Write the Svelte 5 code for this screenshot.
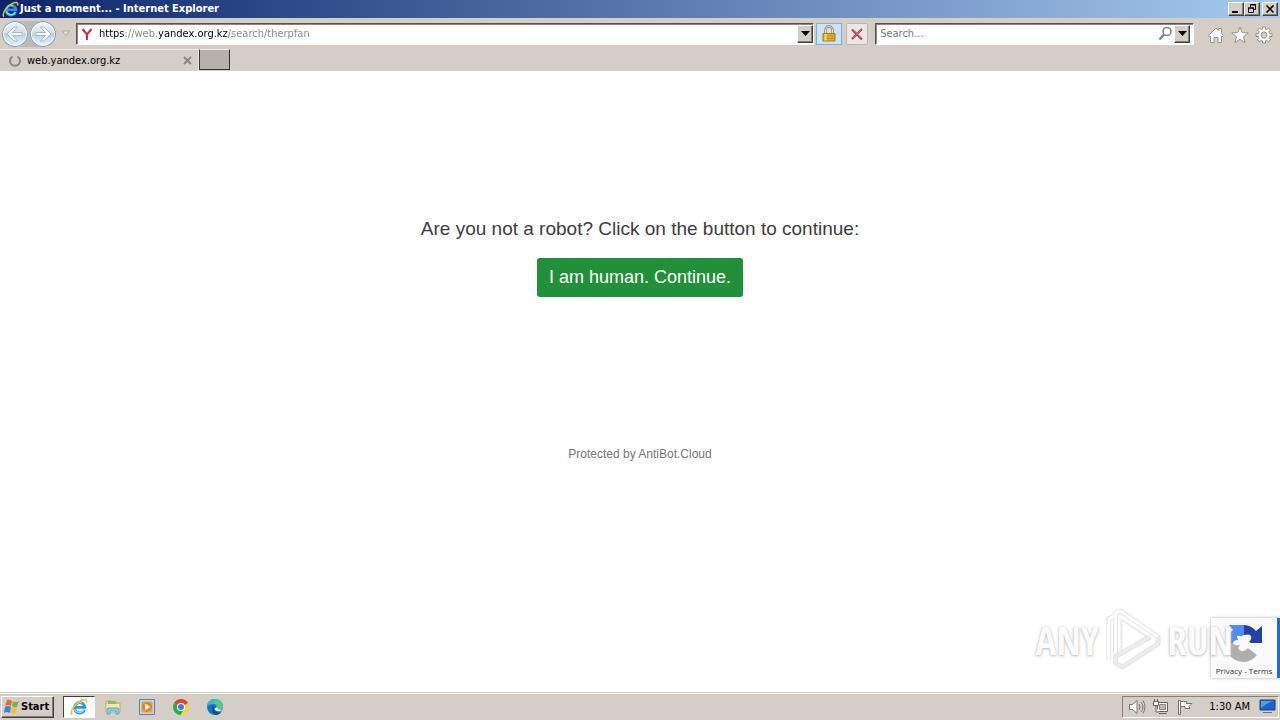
<script>
  let address = $state('https://web.yandex.org.kz/search/therpfan');
  let query = $state('');
</script>

{#snippet ieLogo(size)}
  <svg width={size} height={size} viewBox="0 0 16 16" aria-hidden="true">
    <path d="M12.9 10.4A4.600 4.600 0 1 1 13.2 8.3H5.2" fill="none" stroke="#2d91db" stroke-width="2.600" />
    <path d="M12.5 10.3A4.6 4.6 0 0 1 4 9.9M4.500 6.500a4.500 4.500 0 0 1 6-2" fill="none" stroke="#8bdcf8" stroke-width="1.2" />
    <path d="M1.8 14.8C-.6 12 4.400 5 9.500 2.500C12.800.800 15.500.800 14.600 4.200" fill="none" stroke="#e9c23d" stroke-width="1.4" />
  </svg>
{/snippet}

<div class="screen">
  <header class="title-bar">
    {@render ieLogo(17)}
    <span class="title">Just a moment... - Internet Explorer</span>
    <div class="window-buttons">
      <button aria-label="Minimize"><svg width="12" height="10" viewBox="0 0 12 10"><path d="M2 8h6" stroke="#000" stroke-width="2" /></svg></button>
      <button aria-label="Restore"><svg width="12" height="10" viewBox="0 0 12 10" fill="none" stroke="#000"><path d="M4.500 3V.500h5v5H8M4 1h6M2.500 4v4.500h5V4zM2 4h6" /></svg></button>
      <button class="close" aria-label="Close"><svg width="12" height="10" viewBox="0 0 12 10"><path d="M2.500 1.500l7 7m0-7l-7 7" stroke="#000" stroke-width="1.700" /></svg></button>
    </div>
  </header>

  <nav class="nav-bar" aria-label="Browser">
    <div class="history">
      <button class="round" aria-label="Back"><svg width="26" height="26" viewBox="0 0 26 26">
        <path d="M12 6L5 13L12 20h3.500l-5-5.500H20v-3h-9.500l5-5.500z" fill="#fff" stroke="#9bb9d3" /></svg></button>
      <button class="round" aria-label="Forward"><svg width="26" height="26" viewBox="0 0 26 26">
        <path d="M14 6l7 7l-7 7h-3.500l5-5.500H6v-3h9.500l-5-5.500z" fill="#fff" stroke="#9bb9d3" /></svg></button>
    </div>
    <button class="recent" aria-label="Recent pages"><svg width="10" height="7" viewBox="0 0 10 7"><path d="M1 1h8L5 5.500z" fill="#e5e1da" stroke="#aaa69f" /></svg></button>
    <div class="field address">
      <svg width="16" height="16" viewBox="0 0 16 16" aria-hidden="true"><path d="M2.500 3L7 8.500L11.500 3M7 8v6" fill="none" stroke="#d8293f" stroke-width="2" /></svg>
      <input class="url" aria-label="Address" bind:value={address} spellcheck="false" />
      <button class="drop" aria-label="Show address history"><svg width="9" height="5" viewBox="0 0 9 5"><path d="M0 0h9L4.500 5z" /></svg></button>
    </div>
    <button class="tool lock" aria-label="Security report"><svg width="16" height="18" viewBox="0 0 16 18">
      <path d="M4.500 9V5a3.500 3.500 0 0 1 7 0v4" fill="none" stroke="#8c8159" stroke-width="2.400" />
      <path d="M4.500 9V5a3.500 3.500 0 0 1 7 0v4" fill="none" stroke="#e9dfb8" />
      <path d="M2 8.500h12v7.500H2z" fill="#e3b52c" stroke="#a77a0d" /><path d="M2.500 11h11M2.500 13.500h11" stroke="#b98a14" /><path d="M4.500 9v6.500" stroke="#f9df7b" stroke-width="2" /></svg></button>
    <button class="tool stop" aria-label="Stop"><svg width="14" height="14" viewBox="0 0 14 14">
      <path d="M2 2.500l10 10M12 2L2 12" fill="none" stroke="#9c4850" stroke-width="2.200" /><path d="M3 3l8 8m0-8l-8 8" stroke="#d85b5b" /></svg></button>
    <div class="field search">
      <input aria-label="Search" placeholder="Search..." bind:value={query} />
      <button class="find" aria-label="Search the web"><svg width="15" height="15" viewBox="0 0 15 15" fill="none" stroke="#858585"><circle cx="9" cy="5.500" r="4" stroke-width="1.600" /><path d="M6 8.500l-4.500 5" stroke-width="2.400" /></svg></button>
      <button class="drop" aria-label="Search options"><svg width="9" height="5" viewBox="0 0 9 5"><path d="M0 0h9L4.500 5z" /></svg></button>
    </div>
    <div class="commands">
      <button aria-label="Home"><svg width="18" height="18" viewBox="0 0 18 18" fill="#fff" stroke="#96918a"><path d="M1.500 9.500L9 2l2.500 2.500V2.500h3v5l2 2-1.500 1.500L14.500 10v6.500H11v-5H7v5H3.500V10L2.500 11z" /></svg></button>
      <button aria-label="Favorites"><svg width="18" height="18" viewBox="0 0 18 18" fill="#fff" stroke="#96918a"><path d="M9 1l2.200 5.600 6 .3-4.700 3.800 1.600 5.900L9 13.300l-5.100 3.300 1.600-5.900L.8 6.900l6-.3z" /></svg></button>
      <button aria-label="Tools"><svg width="18" height="18" viewBox="0 0 18 18" fill="#fff" stroke="#96918a"><path d="M7.500 1h3v2.200l1.300.5 1.600-1.600 2.100 2.100-1.600 1.600.6 1.700H17v3h-2.500l-.6 1.700 1.600 1.600-2.100 2.100-1.600-1.600-1.300.5V17h-3v-2.200l-1.300-.5-1.600 1.600-2.100-2.100 1.600-1.600-.6-1.700H1v-3h2.500l.6-1.700-1.600-1.600 2.100-2.100 1.600 1.600 1.300-.5z" /><circle cx="9" cy="9" r="3" fill="#d5cec6" /></svg></button>
    </div>
  </nav>

  <div class="tab-row">
    <div class="tab">
      <svg width="14" height="14" viewBox="0 0 14 14" aria-hidden="true"><path d="M4.500 2.500a5 5 0 1 0 5 0" fill="none" stroke="#858585" stroke-width="2" /></svg>
      <span>web.yandex.org.kz</span>
      <button aria-label="Close tab"><svg width="9" height="9" viewBox="0 0 9 9"><path d="M1 1l7 7m0-7L1 8" stroke="#89847d" stroke-width="1.800" /></svg></button>
    </div>
    <button class="new-tab" aria-label="New tab"></button>
  </div>

  <main>
    <p class="question">Are you not a robot? Click on the button to continue:</p>
    <button class="human">I am human. Continue.</button>
    <p class="protected">Protected by AntiBot.Cloud</p>

    <aside class="captcha">
      <svg width="38" height="38" viewBox="0 0 38 38" aria-hidden="true">
        <path d="M4 1h15v10q-2 0-3 2l3 6H1Q1 11 8 6z" fill="#4d8df2" />
        <path d="M19 1q7 0 12 6l6-5v17H19l6-6q-2-3-6-2z" fill="#213fae" />
        <path d="M1 19h18l-6 5q5 6 10 0l9 7Q26 38 19 38Q2 37 1 19z" fill="#aeaeae" />
        <path d="M12 12q4-1 6 3 3-6 7-4 3 3-1 7 4 1 3 5-3 3-6 0-1 5-5 4-4-2-1-6-6 1-7-2 0-3 5-3z" fill="#fafafa" />
      </svg>
      <div><a href="#privacy">Privacy</a> - <a href="#terms">Terms</a></div>
    </aside>
    <div class="watermark">
      <span>ANY</span>
      <svg width="58" height="64" viewBox="0 0 60 66" fill="none" aria-hidden="true">
        <g stroke-linejoin="round">
          <path d="M5 54V11L11 8M12 46V5L17 3L56 30V37L19 61L12 57V50L48 30" stroke="#e2e2e2" stroke-width="5" />
          <path d="M18 12L44 29L18 46z" stroke="#e9e9e9" stroke-width="2" />
          <path d="M5 54V11L11 8M12 46V5L17 3L56 30" stroke="#fff" stroke-width="3" />
          <path d="M56 30V37L19 61L12 57V50L48 30" stroke="#ededed" stroke-width="3" />
        </g>
      </svg>
      <span>RUN</span>
    </div>
  </main>

  <footer class="taskbar">
    <button class="start"><svg width="17" height="16" viewBox="0 0 17 16" aria-hidden="true">
      <path d="M4 1q2-1 5 1L8 7Q5 5 2 7z" fill="#e8692c" /><path d="M10 2q3 2 6 0l-2 6q-3 1-5-1z" fill="#73b843" /><path d="M2 8q3-2 6 0l-1 6q-3-2-6 0z" fill="#3d83d5" /><path d="M9 8q3 2 5 1l-1 5q-3 2-5 0z" fill="#f0bf35" /></svg>Start</button>
    <div class="launchers">
      <button class="active" aria-label="Internet Explorer">{@render ieLogo(18)}</button>
      <button aria-label="File Explorer"><svg width="18" height="18" viewBox="0 0 18 18"><path d="M2 3h5l1 2h8v9H2z" fill="#ead075" stroke="#c9a850" /><path d="M4 3h8v3H4z" fill="#83bd75" /><path d="M2.500 6h13v8h-13z" fill="#f6e8a0" /><path d="M3 16v-5q0-1 2-1h8q2 0 2 1v5h-3v-3H6v3z" fill="#8bcbea" stroke="#62a9cc" /></svg></button>
      <button aria-label="Media Player"><svg width="18" height="18" viewBox="0 0 18 18"><path d="M1.500 1.500h15v15h-15z" fill="#b9daf4" stroke="#4d88b9" /><path d="M3.500 3.500h11v11h-11z" fill="#f5a13a" /><circle cx="9" cy="9" r="5" fill="#f27e13" /><path d="M7 5.500L12.500 9L7 12.500z" fill="#fff" /></svg></button>
      <button aria-label="Chrome"><svg width="18" height="18" viewBox="0 0 18 18"><circle cx="9" cy="9" r="8" fill="#ffcd40" /><path d="M9 9L2.100 5A8 8 0 0 1 16 5z" fill="#e34133" /><path d="M9 9L2.100 5A8 8 0 0 0 8.500 17L12 11z" fill="#2da94f" /><circle cx="9" cy="9" r="4" fill="#fff" /><circle cx="9" cy="9" r="3" fill="#3c7de0" /></svg></button>
      <button aria-label="Edge"><svg width="18" height="18" viewBox="0 0 18 18"><circle cx="9" cy="9" r="8" fill="#1474c4" /><path d="M1 9A8 8 0 0 1 17 9q0 3-4 3c-3 0-2-1-2-3q-1-3-4-3Q3 6 1 9z" fill="#35b5d2" /><path d="M10 1.500A8 8 0 0 1 17 9q0 3-4 3c-3 0-2-1-2-3 0-3-2-4-4-4z" fill="#58c98b" /><path d="M11 9q0 3 5 3l-1 1q-5 1-7-2z" fill="#e5edf0" /><path d="M7 7q-3 5 2 10h2q3-1 4-3-6 2-7-4z" fill="#174b92" /></svg></button>
    </div>
    <div class="tray">
      <svg width="18" height="16" viewBox="0 0 18 16" fill="#fff" stroke="#77736c"><path d="M1.500 5.500h3L9 1.500v13L4.500 10.500h-3z" /><path d="M11 5q2 3 0 6M13 3q4 5 0 10M15 1.500q4 6 0 13" fill="none" /></svg>
      <svg width="18" height="16" viewBox="0 0 18 16" fill="#fff" stroke="#66625c"><path d="M5.500 3.500h10v9h-10zM7 14.500h8" /><path d="M7.500 5.500h6v5h-6z" fill="#bdb9b3" stroke="#8d8983" /><path d="M1.500 2.500h5v4h-5zM2.500 0v3m3-3v3M4 7v6h3" /></svg>
      <svg width="18" height="16" viewBox="0 0 18 16" fill="#fff" stroke="#77736c"><path d="M2.500 1.500h2v14h-2z" /><path d="M4.500 2.500h6v2h5.500l-3 3 1 2h-5v-2H4.500z" /></svg>
      <time>1:30 AM</time>
      <svg width="17" height="15" viewBox="0 0 17 15"><path d="M1 1h15v10H1z" fill="#1c62c6" stroke="#174584" /><path d="M2 2h13q-8 2-13 7z" fill="#559de6" /><path d="M4 13.500h9" stroke="#536f96" /></svg>
    </div>
  </footer>
</div>

<style>
  .screen {
    display: flex;
    flex-direction: column;
    min-height: 100vh;
    background: #fff;
    color: #000;
    font: 11px/14px Tahoma, "DejaVu Sans Condensed", "DejaVu Sans", sans-serif;
  }
  .screen * { box-sizing: border-box; }
  svg { display: block; flex: none; }
  button { padding: 0; border: 0; background: none; color: inherit; font: inherit; }
  input { min-width: 0; padding: 0; border: 0; outline: 0; font: inherit; }
  p { margin: 0; }

  .title-bar {
    display: flex;
    align-items: center;
    gap: 1px;
    height: 18px;
    padding: 0 2px;
    background: linear-gradient(90deg, #0b256b, #a6caf0);
    color: #fff;
    font-weight: bold;
  }
  .title { flex: 1; }
  .window-buttons { display: flex; }
  .window-buttons button, .drop {
    display: grid;
    place-items: center;
    border: 1px solid;
    border-color: #fff #404040 #404040 #fff;
    background: #d5cec6;
    box-shadow: inset -1px -1px #858078;
  }
  .window-buttons button { width: 16px; height: 14px; }
  .window-buttons .close { margin-left: 2px; }

  .nav-bar {
    display: flex;
    align-items: center;
    height: 31px;
    padding: 0 7px 0 2px;
    background: #d5cec6;
  }
  .history {
    display: flex;
    gap: 2px;
    border-radius: 13px;
    background: #bdbab6;
  }
  .round {
    width: 26px;
    height: 26px;
    border-radius: 50%;
    background: linear-gradient(#f4f8fb, #d1dfe9 45%, #b8d0e2 50%, #eefaff);
    box-shadow: inset 0 0 0 1px #8299ab, inset 0 0 0 2px #f5f9fc;
  }
  .recent { display: grid; place-items: center; width: 20px; height: 24px; }
  .field {
    display: flex;
    align-items: center;
    height: 22px;
    padding-left: 3px;
    border: 1px solid;
    border-color: #59534c #fff #fff #59534c;
    background: #fff;
    box-shadow: inset 1px 1px #8d877f;
  }
  .address { flex: 743; }
  .url {
    flex: 1;
    margin-left: 3px;
    background: linear-gradient(90deg, #000 26px, #858585 26px 60px, #000 60px 129px, #858585 129px);
    background-clip: text;
    -webkit-background-clip: text;
    color: transparent;
    caret-color: #000;
  }
  .drop { width: 16px; height: 18px; }
  .tool { display: grid; place-items: center; height: 22px; border: 1px solid #aaa7a3; }
  .lock { width: 26px; margin-left: 2px; border-color: #84aee0; background: #cde3fb; }
  .stop { width: 22px; margin: 0 7px 0 4px; border-color: #bbb7b2; border-radius: 2px; background: #ebe7e4; }
  .search { flex: 314; padding: 0 3px 0 4px; }
  .search input { flex: 1; background: transparent; }
  .search input::placeholder { color: #777; opacity: 1; }
  .find { margin-right: 1px; }
  .commands { display: flex; gap: 6px; margin: 3px 0 0 13px; }

  .tab-row { display: flex; height: 22px; background: #d5cec6; }
  .tab {
    display: flex;
    align-items: center;
    gap: 5px;
    width: 199px;
    padding: 0 6px 0 8px;
    border-top: 1px solid #eeeae5;
    border-right: 1px solid #f2eeea;
  }
  .tab span { flex: 1; }
  .new-tab {
    width: 31px;
    height: 21px;
    border: 1px solid #34312e;
    border-top-color: #f1ede9;
    background: #b8b0aa;
  }

  main {
    position: relative;
    display: flex;
    flex: 1;
    flex-direction: column;
    align-items: center;
    padding-top: 145px;
    font-family: Arial, "Liberation Sans", sans-serif;
  }
  .question { color: #3d3d3d; font-size: 19px; line-height: 26px; }
  .human {
    margin-top: 16px;
    padding: 6px 12px;
    border-radius: 3px;
    background: #22903a;
    color: #fff;
    font-size: 18px;
    line-height: 27px;
  }
  .protected { margin-top: 149px; color: #777; font-size: 12px; line-height: 16px; }
  .captcha {
    position: absolute;
    right: 0;
    bottom: 14px;
    display: flex;
    flex-direction: column;
    align-items: center;
    gap: 2px;
    width: 69px;
    padding: 6px 0 1px;
    border-right: 3px solid #1b70d2;
    background: #fafafa;
    box-shadow: 0 0 3px #aaa;
    color: #333;
    font: 8px/13px "Open Sans", sans-serif;
    white-space: nowrap;
  }
  .captcha a { color: inherit; text-decoration: none; }
  .watermark {
    position: absolute;
    right: 47px;
    bottom: 20px;
    display: flex;
    align-items: center;
    gap: 5px;
    font: 39px/40px "Open Sans Condensed", "Liberation Sans Narrow", sans-serif;
    pointer-events: none;
  }
  .watermark span {
    color: #fbfbfb;
    text-shadow: 0 0 1px #bbb, 0 1px 3px #bbb;
  }

  .taskbar {
    display: flex;
    align-items: center;
    height: 28px;
    padding: 0 1px;
    border-top: 1px solid #d5cec6;
    background: #d5cec6;
    box-shadow: inset 0 1px #fff;
  }
  .start {
    display: flex;
    align-items: center;
    gap: 1px;
    height: 22px;
    padding: 0 4px 0 1px;
    border: 1px solid;
    border-color: #fff #404040 #404040 #fff;
    box-shadow: inset -1px -1px #858078;
    font-weight: bold;
  }
  .launchers { display: flex; flex: 1; gap: 2px; margin-left: 9px; }
  .launchers button { display: grid; place-items: center; width: 32px; height: 22px; }
  .launchers .active { border: 1px solid; border-color: #404040 #fff #fff #404040; background: #fff; }
  .tray {
    display: flex;
    align-items: center;
    gap: 6px;
    height: 22px;
    padding: 0 2px 0 5px;
    border: 1px solid;
    border-color: #858078 #fff #fff #858078;
  }
  .tray time { margin: 0 3px 0 9px; }
</style>
